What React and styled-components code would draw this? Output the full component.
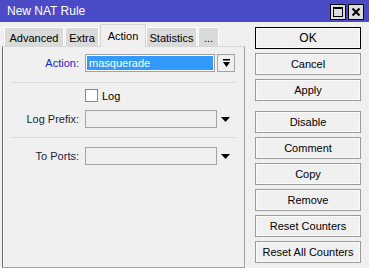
import styled, { createGlobalStyle } from "styled-components";

const GlobalStyle = createGlobalStyle`
  html, body {
    margin: 0;
    padding: 0;
    background: #f0f0f0;
  }
  body {
    font-family: "Liberation Sans", Arial, sans-serif;
    font-size: 11px;
    color: #000;
  }
`;

const Window = styled.div`
  width: 369px;
  height: 268px;
  overflow: hidden;
  background: #f0f0f0;
  display: flex;
  flex-direction: column;
`;

const TitleBar = styled.div`
  height: 22px;
  flex-shrink: 0;
  background: #4b4bc8;
  color: #fff;
  display: flex;
  align-items: center;
  justify-content: space-between;
  padding: 0 5px 0 7px;
  font-size: 12px;
`;

const TitleButtons = styled.div`
  display: flex;
  gap: 2px;
  margin-top: 1px;
`;

const TitleButton = styled.div`
  width: 14px;
  height: 14px;
  background: #dcdcdc;
  border: 1px solid #000;
  display: flex;
  align-items: center;
  justify-content: center;
`;

const Body = styled.div`
  flex: 1;
  display: flex;
  gap: 10px;
  padding: 2px 8px 0 2px;
`;

const LeftColumn = styled.div`
  width: 243px;
  display: flex;
  flex-direction: column;
`;

const TabRow = styled.div`
  display: flex;
  align-items: flex-end;
  height: 22px;
  padding-left: 2px;
  position: relative;
  z-index: 1;
`;

const Tab = styled.div`
  height: ${(p) => (p.$active ? "23px" : "19px")};
  margin-bottom: ${(p) => (p.$active ? "-1px" : "0")};
  margin-right: ${(p) => (p.$active ? "0" : "1px")};
  width: ${(p) => p.$w}px;
  box-sizing: border-box;
  background: ${(p) => (p.$active ? "#f0f0f0" : "#dadada")};
  border: 1px solid ${(p) => (p.$active ? "#d4d4d4" : "#ffffff")};
  border-bottom: none;
  display: flex;
  align-items: center;
  justify-content: center;
  padding-top: ${(p) => (p.$active ? "0" : "2px")};
`;

const Panel = styled.div`
  flex: 1;
  border: 1px solid #a0a0a0;
  border-top-color: #d8d8d8;
  border-left-color: #6a6a6a;
  box-shadow: inset 1px 0 0 #fff;
  padding-top: 7px;
  display: flex;
  flex-direction: column;
`;

const Row = styled.div`
  display: flex;
  align-items: center;
  height: ${(p) => p.$h || 18}px;
  margin-top: ${(p) => p.$mt || 0}px;
`;

const Label = styled.div`
  width: 76px;
  margin-right: 6px;
  text-align: right;
  color: ${(p) => (p.$accent ? "#2323d6" : "#1c1c3a")};
`;

const Field = styled.div`
  width: ${(p) => p.$w}px;
  height: 18px;
  box-sizing: border-box;
  border: 1px solid #a3a3a3;
  background: ${(p) => (p.$selected ? "#3399ff" : "#f0f0f0")};
  box-shadow: ${(p) => (p.$selected ? "inset 0 0 0 1px #fff" : "none")};
  color: #fff;
  padding-left: 3px;
  display: flex;
  align-items: center;
`;

const DropButton = styled.div`
  width: 18px;
  height: 18px;
  box-sizing: border-box;
  margin-left: 2px;
  border: 1px solid #a3a3a3;
  background: #f0f0f0;
  display: flex;
  align-items: center;
  justify-content: center;
`;

const Arrow = styled.div`
  margin-left: 4px;
  display: flex;
  align-items: center;
`;

const Separator = styled.div`
  height: 1px;
  background: #dadada;
  margin: ${(p) => p.$mt}px 8px 0 8px;
`;

const Check = styled.div`
  width: 13px;
  height: 13px;
  box-sizing: border-box;
  border: 1px solid #8a8a8a;
  background: #fff;
  margin-right: 4px;
`;

const ButtonColumn = styled.div`
  width: 106px;
  display: flex;
  flex-direction: column;
  padding-top: 3px;
`;

const Button = styled.div`
  height: 22px;
  box-sizing: border-box;
  margin-top: ${(p) => p.$mt || 0}px;
  margin-bottom: 4px;
  border: 1px solid ${(p) => (p.$default ? "#000" : "#9a9a9a")};
  background: #f0f0f0;
  box-shadow: inset 0 0 0 1px #fbfbfb;
  display: flex;
  align-items: center;
  justify-content: center;
  font-size: ${(p) => (p.$big ? "12px" : "11px")};
`;

const DownTriangle = () => (
  <svg width="9" height="5" viewBox="0 0 9 5">
    <polygon points="0,0 9,0 4.5,5" fill="#000" />
  </svg>
);

const tabs = [
  { name: "Advanced", w: 60 },
  { name: "Extra", w: 34 },
  { name: "Action", w: 46, active: true },
  { name: "Statistics", w: 51 },
  { name: "...", w: 21 },
];

const buttons = [
  { name: "OK", isDefault: true },
  { name: "Cancel" },
  { name: "Apply" },
  { name: "Disable", mt: 6 },
  { name: "Comment" },
  { name: "Copy" },
  { name: "Remove" },
  { name: "Reset Counters" },
  { name: "Reset All Counters" },
];

export default function App() {
  return (
    <>
      <GlobalStyle />
      <Window>
        <TitleBar>
          <span>New NAT Rule</span>
          <TitleButtons>
            <TitleButton>
              <svg width="10" height="10" viewBox="0 0 10 10">
                <rect x="0.5" y="0.5" width="9" height="9" fill="none" stroke="#000" />
                <rect x="0" y="0" width="10" height="2" fill="#000" />
              </svg>
            </TitleButton>
            <TitleButton>
              <svg width="8" height="8" viewBox="0 0 8 8">
                <path d="M0.5 0.5 L7.5 7.5 M7.5 0.5 L0.5 7.5" stroke="#000" strokeWidth="2" />
              </svg>
            </TitleButton>
          </TitleButtons>
        </TitleBar>
        <Body>
          <LeftColumn>
            <TabRow>
              {tabs.map((t) => (
                <Tab key={t.name} $w={t.w} $active={t.active}>
                  {t.name}
                </Tab>
              ))}
            </TabRow>
            <Panel>
              <Row>
                <Label $accent>Action:</Label>
                <Field $w={130} $selected>
                  masquerade
                </Field>
                <DropButton>
                  <svg width="7" height="8" viewBox="0 0 7 8">
                    <rect x="0" y="0" width="7" height="1.5" fill="#000" />
                    <polygon points="0,3 7,3 3.5,8" fill="#000" />
                  </svg>
                </DropButton>
              </Row>
              <Separator $mt={10} />
              <Row $h={13} $mt={6}>
                <Label />
                <Check />
                <span>Log</span>
              </Row>
              <Row $mt={8}>
                <Label>Log Prefix:</Label>
                <Field $w={132} />
                <Arrow>
                  <DownTriangle />
                </Arrow>
              </Row>
              <Separator $mt={9} />
              <Row $mt={9}>
                <Label>To Ports:</Label>
                <Field $w={132} />
                <Arrow>
                  <DownTriangle />
                </Arrow>
              </Row>
            </Panel>
          </LeftColumn>
          <ButtonColumn>
            {buttons.map((b) => (
              <Button key={b.name} $default={b.isDefault} $big={b.isDefault} $mt={b.mt}>
                {b.name}
              </Button>
            ))}
          </ButtonColumn>
        </Body>
      </Window>
    </>
  );
}
